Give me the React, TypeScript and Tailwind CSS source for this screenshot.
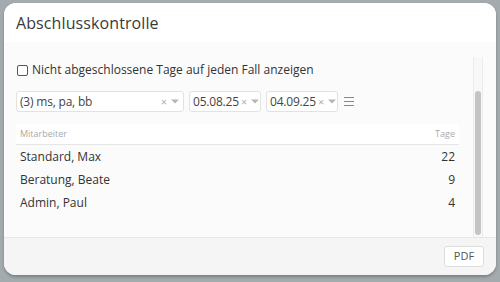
import React from "react";

function Caret() {
  return (
    <svg width="8" height="5" viewBox="0 0 8 5" className="shrink-0">
      <path d="M0 0.5 L8 0.5 L4 4.5 Z" fill="#b5b5b5" />
    </svg>
  );
}

function Clear() {
  return <span className="text-[11px] leading-none text-[#b0b0b0]">×</span>;
}

function Select({ value, width }: { value: string; width: string }) {
  return (
    <div
      className={`${width} h-[21px] flex items-center border border-[#e2e2e2] rounded-[3px] bg-white pl-[3px] pr-[4px]`}
    >
      <span className="flex-1 text-[12px] text-[#444] leading-none whitespace-nowrap tracking-[-0.2px]">{value}</span>
      <div className="flex items-center gap-[4px] pl-[2px]">
        <Clear />
        <Caret />
      </div>
    </div>
  );
}

export default function App() {
  const rows = [
    ["Standard, Max", "22"],
    ["Beratung, Beate", "9"],
    ["Admin, Paul", "4"],
  ];
  return (
    <div
      className="w-[500px] h-[282px] bg-[#a3abaf] pt-[3px] px-[4px] pb-[7px] overflow-hidden"
      style={{ fontFamily: '"Open Sans", sans-serif' }}
    >
      <div className="w-[492px] h-[272px] rounded-[12px] overflow-hidden bg-white flex flex-col shadow-[0_2px_3px_rgba(0,0,0,0.25)]">
        <div className="h-[39px] shrink-0 bg-white flex items-center pl-[12px]">
          <span className="text-[16px] text-[#3a3a3a] tracking-[0.1px]">Abschlusskontrolle</span>
        </div>
        <div className="flex-1 bg-[#fbfbfb] flex pl-[12px]">
          <div className="w-[443px] flex flex-col">
            <label className="mt-[21px] h-[14px] flex items-center gap-[4px]">
              <span className="w-[11px] h-[11px] border border-[#555] rounded-[2px] bg-white ml-[1px]" />
              <span className="text-[12px] text-[#333] leading-none">
                Nicht abgeschlossene Tage auf jeden Fall anzeigen
              </span>
            </label>
            <div className="mt-[14px] flex items-center gap-[5px]">
              <Select value="(3) ms, pa, bb" width="w-[168px]" />
              <Select value="05.08.25" width="w-[72px]" />
              <Select value="04.09.25" width="w-[72px]" />
              <div className="ml-[1px] flex flex-col gap-[3px]">
                <span className="block w-[10px] h-[1px] bg-[#888]" />
                <span className="block w-[10px] h-[1px] bg-[#888]" />
                <span className="block w-[10px] h-[1px] bg-[#888]" />
              </div>
            </div>
            <div className="mt-[12px] h-[21px] flex items-center border-b border-[#e6e6e6] bg-white px-[4px]">
              <span className="flex-1 text-[9px] text-[#aaa]">Mitarbeiter</span>
              <span className="text-[9px] text-[#aaa]">Tage</span>
            </div>
            {rows.map(([n, t]) => (
              <div key={n} className="h-[23px] flex items-center px-[4px]">
                <span className="flex-1 text-[12px] text-[#333]">{n}</span>
                <span className="text-[12px] text-[#333]">{t}</span>
              </div>
            ))}
          </div>
          <div className="ml-[14px] mt-[15px] w-[10px] border-x border-[#ececec] bg-[#f8f8f8] flex flex-col pt-[34px]">
            <div className="mx-auto w-[6px] flex-1 rounded-[3px] bg-[#c4c4c4] mb-[2px]" />
          </div>
        </div>
        <div className="h-[38px] shrink-0 bg-[#f5f5f5] border-t border-[#e6e6e6] flex items-start justify-end pr-[12px] pt-[8px]">
          <div className="w-[40px] h-[21px] border border-[#dedede] rounded-[3px] bg-white flex items-center justify-center text-[11px] text-[#555]">
            PDF
          </div>
        </div>
      </div>
    </div>
  );
}
